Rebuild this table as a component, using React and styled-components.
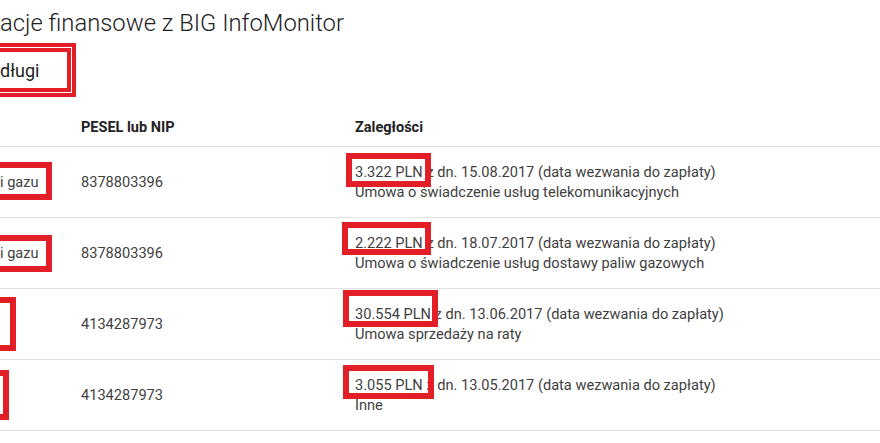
import React from "react";
import styled, { createGlobalStyle, css } from "styled-components";

const RED = "#e21f26";

const Global = createGlobalStyle`
  html, body { margin: 0; padding: 0; background: #fff; }
  body { font-family: Roboto, "Noto Sans", "Liberation Sans", sans-serif; color: #333; }
`;

const Page = styled.div`
  width: 880px;
  height: 443px;
  overflow: hidden;
  position: relative;
  background: #fff;
`;

const Title = styled.h1`
  margin: 0;
  padding-top: 8px;
  font-size: 23.8px;
  line-height: 30px;
  font-weight: 300;
  color: #222;
  white-space: nowrap;
`;

const SubTitle = styled.h2`
  margin: 21px 0 0;
  font-size: 18px;
  line-height: 24px;
  font-weight: 400;
  color: #222;
`;

const Marked = styled.span`
  position: relative;
  display: inline-block;
`;

const Mark = styled.span`
  position: absolute;
  top: ${(p) => p.$t}px;
  right: ${(p) => p.$r}px;
  bottom: ${(p) => p.$b}px;
  left: ${(p) => p.$l}px;
  border: 6px solid ${RED};
  pointer-events: none;
  ${(p) =>
    p.$double &&
    css`
      border-width: 4px;
      box-shadow: 0 0 0 1px #fff, 0 0 0 5px ${RED};
    `}
`;

const Table = styled.div`
  margin-top: 25px;
  display: grid;
  grid-template-columns: 81px 274px 1fr;
`;

const HeadCell = styled.div`
  height: 38px;
  display: flex;
  align-items: center;
  font-size: 14.5px;
  font-weight: 700;
  color: #222;
  border-bottom: 1px solid #e2e2e2;
`;

const Cell = styled.div`
  position: relative;
  height: 70px;
  display: flex;
  flex-direction: column;
  justify-content: center;
  font-size: 14.6px;
  line-height: 20px;
  font-weight: 400;
  color: #3f3f3f;
  border-bottom: 1px solid #e2e2e2;
  white-space: nowrap;
`;

const Line = styled.div``;

const rows = [
  {
    left: "i gazu",
    leftMark: { t: 15, r: 29, b: 17, l: -40 },
    pesel: "8378803396",
    amount: "3.322 PLN",
    rest: " z dn. 15.08.2017 (data wezwania do zapłaty)",
    type: "Umowa o świadczenie usług telekomunikacyjnych",
    mark: { t: -9, r: -8, b: -5, l: -9 },
  },
  {
    left: "i gazu",
    leftMark: { t: 17, r: 29, b: 16, l: -40 },
    pesel: "8378803396",
    amount: "2.222 PLN",
    rest: " z dn. 18.07.2017 (data wezwania do zapłaty)",
    type: "Umowa o świadczenie usług dostawy paliw gazowych",
    mark: { t: -11, r: -8, b: -2, l: -13 },
  },
  {
    left: "",
    leftMark: { t: 8, r: 65, b: 8, l: -40 },
    pesel: "4134287973",
    amount: "30.554 PLN",
    rest: " z dn. 13.06.2017 (data wezwania do zapłaty)",
    type: "Umowa sprzedaży na raty",
    mark: { t: -14, r: -7, b: -3, l: -12 },
  },
  {
    left: "",
    leftMark: { t: 10, r: 72, b: 10, l: -40 },
    pesel: "4134287973",
    amount: "3.055 PLN",
    rest: " z dn. 13.05.2017 (data wezwania do zapłaty)",
    type: "Inne",
    mark: { t: -10, r: -11, b: -4, l: -12 },
  },
];

export default function App() {
  return (
    <Page>
      <Global />
      <Title>acje finansowe z BIG InfoMonitor</Title>
      <SubTitle>
        <Marked>
          długi
          <Mark $double $t={-11} $r={-32} $b={-9} $l={-30} />
        </Marked>
      </SubTitle>
      <Table>
        <HeadCell />
        <HeadCell>PESEL lub NIP</HeadCell>
        <HeadCell>Zaległości</HeadCell>
        {rows.map((r, i) => (
          <React.Fragment key={i}>
            <Cell>
              <Line>{r.left}</Line>
              <Mark $t={r.leftMark.t} $r={r.leftMark.r} $b={r.leftMark.b} $l={r.leftMark.l} />
            </Cell>
            <Cell>{r.pesel}</Cell>
            <Cell>
              <Line>
                <Marked>
                  {r.amount}
                  <Mark $t={r.mark.t} $r={r.mark.r} $b={r.mark.b} $l={r.mark.l} />
                </Marked>
                {r.rest}
              </Line>
              <Line>{r.type}</Line>
            </Cell>
          </React.Fragment>
        ))}
      </Table>
    </Page>
  );
}
